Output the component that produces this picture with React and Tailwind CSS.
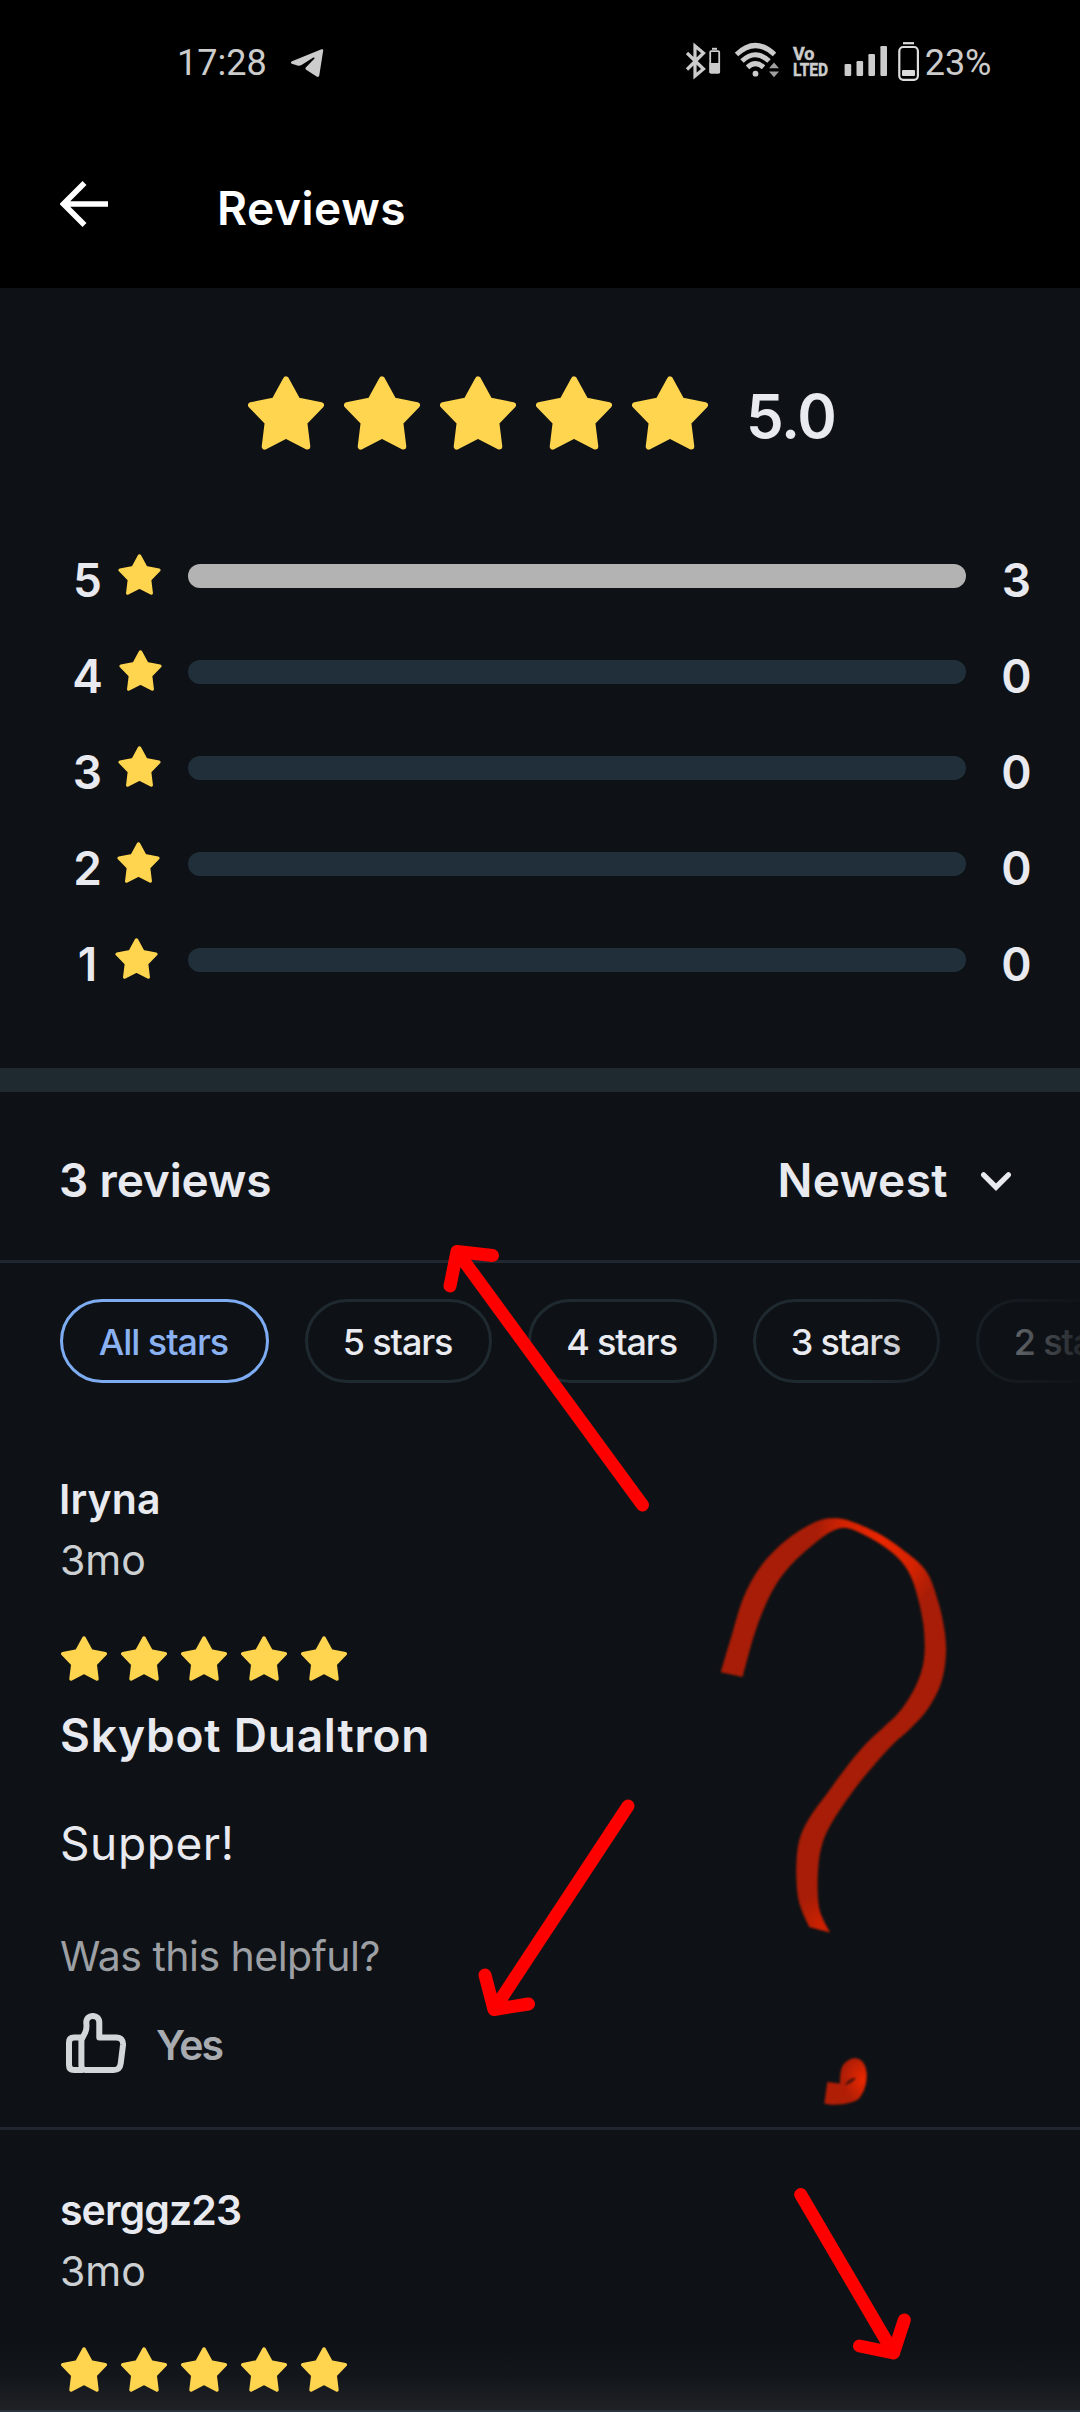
const BREAKDOWN = [
  { stars: 5, count: 3, digit: "w-[28px]", fill: "bg-[#b3b3b3]" },
  { stars: 4, count: 0, digit: "w-[30px]", fill: "bg-[#212f3b]" },
  { stars: 3, count: 0, digit: "w-[28px]", fill: "bg-[#212f3b]" },
  { stars: 2, count: 0, digit: "w-[26px]", fill: "bg-[#212f3b]" },
  { stars: 1, count: 0, digit: "w-[22px]", fill: "bg-[#212f3b]" },
];

const FILTERS = [
  { label: "All stars", style: "w-[209px] border-[#7dacf2] text-[#8ab1f2] tracking-[-1.05px]" },
  { label: "5 stars", style: "w-[187px] border-[#1f2930] text-[#e9ebf0] tracking-[-1.15px]" },
  { label: "4 stars", style: "w-[189px] border-[#1f2930] text-[#e9ebf0] tracking-[-1.15px]" },
  { label: "3 stars", style: "w-[187px] border-[#1f2930] text-[#e9ebf0] tracking-[-1.15px]" },
  { label: "2 stars", style: "w-[187px] border-[#1f2930] text-[#e9ebf0] tracking-[-1.15px]" },
];

function Star({ className }) {
  return (
    <svg viewBox="0 0 76 74" className={className} fill="#ffd54f" stroke="#ffd54f" strokeWidth="6" strokeLinejoin="round">
      <path d="M38 3.4 49.5 24.5 73 29.2 56.3 46.3 59.3 70.6 38 59.5 16.7 70.6 19.7 46.3 3 29.2 26.5 24.5Z" />
    </svg>
  );
}

function StarRow() {
  return (
    <div className="relative z-10 mt-[46px] flex gap-[14px] pl-px">
      {[1, 2, 3, 4, 5].map((n) => (
        <Star key={n} className="h-[45px] w-[46px]" />
      ))}
    </div>
  );
}

function StatusBar() {
  return (
    <div className="flex h-[125px] items-center bg-black pl-[177px] font-[Roboto,sans-serif] text-[36px] leading-none text-[#cccccc]">
      <span>17:28</span>
      <svg className="ml-[23px] h-[30px] w-[34px]" viewBox="0 0 34 30" fill="#cccccc">
        <path d="M2 13.2 31.5 1.3Q33.3.7 33.2 2.5L29.3 27.3Q28.8 29.8 26.6 28.6L16.2 21.7Q14.8 20.5 16 19.2L24.5 10.4Q25 9.2 23.4 9.6L11.5 17Q9.5 18.2 7.5 17.6L1.8 15.8Q-.2 14.6 2 13.2Z" />
      </svg>
      <svg className="ml-[361px] h-[45px] w-[36px]" viewBox="685 40 36 45" fill="none" stroke="#cccccc">
        <path d="M687 53 703.5 69 695 76V46L703.5 53 687 69.5" strokeWidth="3.2" />
        <path d="M712 48.800H717" strokeWidth="2" />
        <rect x="710.200" y="51.200" width="9" height="21.600" rx="1" strokeWidth="1.800" />
        <path d="M709.500 63H720V73H709.500Z" fill="#cccccc" stroke="none" />
      </svg>
      <svg className="ml-[13px] h-[45px] w-[46px]" viewBox="734 40 46 45" fill="none" stroke="#cccccc" strokeWidth="5">
        <path d="M736.500 54.500Q755.500 36.500 774.500 54.500" />
        <path d="M742 61Q755.500 48.500 769 61" />
        <path d="M747.500 67.300Q755.500 60 763.500 67.300" />
        <circle cx="755.500" cy="73.700" r="2.900" fill="#cccccc" stroke="none" />
        <path d="M774 62.600 779 68.300H769ZM774 77.300 779 71.500H769Z" fill="#a0a0a0" stroke="none" />
      </svg>
      <svg className="ml-[12px] h-[45px] w-[38px] overflow-visible" viewBox="792 40 38 45" fill="#cccccc" stroke="#cccccc" strokeWidth="0.500">
        <text x="793" y="60" fontSize="19" fontWeight="700" textLength="21.500" lengthAdjust="spacingAndGlyphs">Vo</text>
        <text x="793" y="75.800" fontSize="19" fontWeight="700" textLength="35" lengthAdjust="spacingAndGlyphs">LTED</text>
      </svg>
      <svg className="ml-[14px] h-[45px] w-[44px]" viewBox="844 40 44 45" fill="#cccccc">
        <rect x="844.600" y="64" width="6.600" height="12" rx="1.200" />
        <rect x="856.500" y="61" width="6.600" height="15" rx="1.200" />
        <rect x="868.400" y="54" width="6.600" height="22" rx="1.200" />
        <rect x="880.400" y="46" width="6.600" height="30" rx="1.200" />
      </svg>
      <svg className="ml-[10px] h-[45px] w-[22px]" viewBox="898 40 22 45" fill="none" stroke="#dddddd" strokeWidth="2.200">
        <path d="M903 43.200H914" />
        <rect x="899.300" y="47" width="18.600" height="32.800" rx="4" />
        <rect x="902" y="70" width="13" height="6" rx="1" fill="#dddddd" stroke="none" />
      </svg>
      <span className="ml-[5px]">23%</span>
    </div>
  );
}

function AppBar() {
  return (
    <div className="flex h-[163px] items-center bg-black pl-[60px]">
      <svg className="mb-[5px] h-[48px] w-[48px]" viewBox="0 0 48 48" fill="none" stroke="#ffffff" strokeWidth="5.6">
        <path d="M24.500 3 3.500 24 24.500 45M3.500 24H48" />
      </svg>
      <h1 className="ml-[109px] pt-[2px] text-[46px] font-semibold leading-none tracking-[0.57px] text-white">Reviews</h1>
    </div>
  );
}

function Summary() {
  return (
    <section className="flex h-[780px] flex-col pt-[88px]">
      <div className="flex h-[74px] items-center gap-[20px] pl-[248px]">
        {[1, 2, 3, 4, 5].map((n) => (
          <Star key={n} className="h-[74px] w-[76px]" />
        ))}
        <span className="ml-[18px] pt-[6px] text-[60px] font-semibold leading-none tracking-[-1.2px]">5.0</span>
      </div>
      <div className="mt-[78px] flex flex-col">
        {BREAKDOWN.map((row) => (
          <div key={row.stars} className="grid h-[96px] grid-cols-[188px_778px_101px] items-center text-[46px] font-semibold leading-none">
            <div className="flex items-center justify-center gap-[16px] pl-[46px]">
              <span className={`${row.digit} flex justify-center pt-[8px]`}>{row.stars}</span>
              <Star className="mb-[3px] h-[41px] w-[43px]" />
            </div>
            <div className={`h-[24px] rounded-full ${row.fill}`} />
            <span className="pt-[8px] text-center">{row.count}</span>
          </div>
        ))}
      </div>
    </section>
  );
}

function SortHeader() {
  return (
    <div className="flex h-[171px] items-center justify-between border-b-[3px] border-[#1f2630] pl-[59px] pr-[69px] pt-[8px] text-[46px] font-semibold leading-none">
      <span className="tracking-[-0.16px]">3 reviews</span>
      <div className="flex items-center gap-[33px]">
        <span className="tracking-[0.4px]">Newest</span>
        <svg className="mt-[3px] h-[19px] w-[30px]" viewBox="0 0 30 19" fill="none" stroke="#e8eaf0" strokeWidth="5.200" strokeLinecap="round">
          <path d="M2.600 2.800 15 15.200 27.400 2.800" />
        </svg>
      </div>
    </div>
  );
}

function Filters() {
  return (
    <div className="relative flex gap-[36px] overflow-hidden pl-[60px] pt-[36px]">
      {FILTERS.map((f) => (
        <div
          key={f.label}
          className={`flex h-[84px] shrink-0 items-center justify-center rounded-full border-[3px] pr-[2px] pt-[2px] text-[36px] font-medium leading-none ${f.style}`}
        >
          {f.label}
        </div>
      ))}
      <div className="absolute inset-y-0 right-0 w-[220px] bg-linear-to-r from-transparent to-[#0e1216]/90 via-[#0e1216]/65 via-[73%]" />
    </div>
  );
}

function Author({ name, style }) {
  return (
    <>
      <p className={`text-[41px] font-semibold leading-[62px] ${style}`}>{name}</p>
      <p className="text-[41px] font-normal leading-[60px] text-[#ccd0d2]">3mo</p>
      <StarRow />
    </>
  );
}

function ThumbUp() {
  return (
    <svg className="ml-[6px] h-[60px] w-[61px]" viewBox="0 0 61 60" fill="none" stroke="#d3d7da" strokeWidth="6" strokeLinejoin="round">
      <path d="M15.400 27 19.200 19.500C21.300 15.500 20.300 12 20.300 9.500 20.300 .8 33.300 .8 33.300 9.500V24.500H50Q57.600 24.800 57 32L54.700 50.500Q53.900 57 47.500 57H19.500Q15.400 57 15.400 52.500Z" />
      <path d="M15.400 24.500H8Q3 24.500 3 29.500V52Q3 57 8 57H17" />
    </svg>
  );
}

// Edges of the brush stroke, in brush units (x: 1/3 px, y: 0.42 px).
const OUTER_EDGE = [
  [122, 457], [153, 375], [190, 280], [235, 213], [290, 163], [350, 125], [415, 97], [465, 91], [515, 99],
  [590, 125], [665, 164], [738, 216], [775, 290], [795, 365], [797, 425], [782, 485], [745, 542], [692, 590],
  [640, 627], [590, 670], [520, 738], [455, 815], [425, 870], [414, 930], [415, 1003], [427, 1040], [450, 1075],
];
const INNER_EDGE = [
  [388, 1062], [364, 1020], [352, 980], [349, 915], [358, 855], [388, 803], [440, 746], [500, 681], [560, 625],
  [610, 588], [660, 549], [708, 488], [732, 425], [731, 350], [712, 275], [692, 228], [665, 194], [620, 162],
  [560, 133], [500, 114], [450, 124], [390, 160], [335, 200], [290, 246], [252, 305], [220, 375], [188, 468],
];

function spline(points) {
  return points
    .slice(1)
    .map((p, i) => {
      const a = points[i];
      const before = points[i - 1] ?? a;
      const after = points[i + 2] ?? p;
      return `C${a[0] + (p[0] - before[0]) / 6} ${a[1] + (p[1] - before[1]) / 6} ${p[0] - (after[0] - a[0]) / 6} ${p[1] - (after[1] - a[1]) / 6} ${p[0]} ${p[1]}`;
    })
    .join("");
}

const HOOK = `M${OUTER_EDGE[0].join(" ")}${spline(OUTER_EDGE)}L${INNER_EDGE[0].join(" ")}${spline(INNER_EDGE)}Z`;

function QuestionMark() {
  return (
    <svg className="pointer-events-none absolute left-[680px] top-[1480px] h-[660px] w-[320px] blur-[1.2px]" viewBox="0 0 960 1568" preserveAspectRatio="none">
      <defs>
        <radialGradient id="glowTop" gradientUnits="userSpaceOnUse" cx="600" cy="145" r="190">
          <stop offset="0" stopColor="#ea2600" />
          <stop offset="0.6" stopColor="#dc2400" stopOpacity="0.85" />
          <stop offset="1" stopColor="#dc2400" stopOpacity="0" />
        </radialGradient>
        <radialGradient id="glowEnd" gradientUnits="userSpaceOnUse" cx="425" cy="1060" r="80">
          <stop offset="0" stopColor="#cf2200" />
          <stop offset="1" stopColor="#cf2200" stopOpacity="0" />
        </radialGradient>
        <radialGradient id="glowDot" gradientUnits="userSpaceOnUse" cx="550" cy="1425" r="60">
          <stop offset="0" stopColor="#ea2800" />
          <stop offset="1" stopColor="#ea2800" stopOpacity="0" />
        </radialGradient>
        <path id="hook" d={HOOK} />
        <path
          id="dot"
          d="M442 1430 480 1434C480 1412 482 1397 492 1387 518 1364 558 1370 560 1412 560 1440 550 1458 535 1471 510 1484 460 1487 433 1481Z"
        />
      </defs>
      <use href="#hook" fill="#a81d07" />
      <use href="#hook" fill="url(#glowTop)" />
      <use href="#hook" fill="url(#glowEnd)" />
      <use href="#dot" fill="#b01e06" />
      <use href="#dot" fill="url(#glowDot)" />
      <path d="M494 1438Q505 1420 528 1420 520 1432 494 1438Z" fill="#4a120c" />
    </svg>
  );
}

function Arrows() {
  return (
    <svg
      className="pointer-events-none absolute left-0 top-0 z-20 h-[2412px] w-[1080px]"
      viewBox="0 0 1080 2412"
      fill="none"
      stroke="#ff0000"
      strokeWidth="13"
      strokeLinecap="round"
      strokeLinejoin="round"
    >
      <path d="M642.500 1505 457 1251.500M450 1286 457 1251.500 492.500 1255.500" />
      <path d="M628 1806 494 2009.500M485 1975 494 2009.500 528.500 2004" />
      <path d="M800.700 2194.500 893.500 2353M859.500 2346 893.500 2353 904.300 2320" />
    </svg>
  );
}

export default function App() {
  return (
    <main className="relative h-[2412px] w-[1080px] overflow-hidden bg-[#0e1216] font-[Inter,sans-serif] text-[#e8eaf0]">
      <StatusBar />
      <AppBar />
      <Summary />
      <div className="h-[24px] bg-[#1f2930]" />
      <SortHeader />
      <Filters />
      <article className="border-b-[3px] border-[#1f2630] pb-[54px] pl-[60px] pt-[85px]">
        <Author name="Iryna" style="-ml-px tracking-[0.1px]" />
        <h2 className="mt-[24px] text-[46px] font-semibold leading-[60px] tracking-[0.8px]">Skybot Dualtron</h2>
        <p className="mt-[48px] text-[46px] leading-[60px] tracking-[0.6px]">Supper!</p>
        <p className="mt-[53px] text-[41px] leading-[60px] tracking-[-0.52px] text-[#9c9fa3]">Was this helpful?</p>
        <div className="mt-[27px] flex h-[60px] items-center">
          <ThumbUp />
          <span className="ml-[29px] pt-[4px] text-[41px] font-semibold leading-none tracking-[-2px] text-[#a8abb0]">Yes</span>
        </div>
      </article>
      <article className="pl-[60px] pt-[49px]">
        <Author name="serggz23" style="tracking-[-0.9px]" />
      </article>
      <div className="absolute inset-x-0 bottom-0 h-[72px] border-b-2 border-[#2a333e] bg-linear-to-b from-transparent via-[#1f2125]/25 to-[#1f2125]" />
      <QuestionMark />
      <Arrows />
    </main>
  );
}
